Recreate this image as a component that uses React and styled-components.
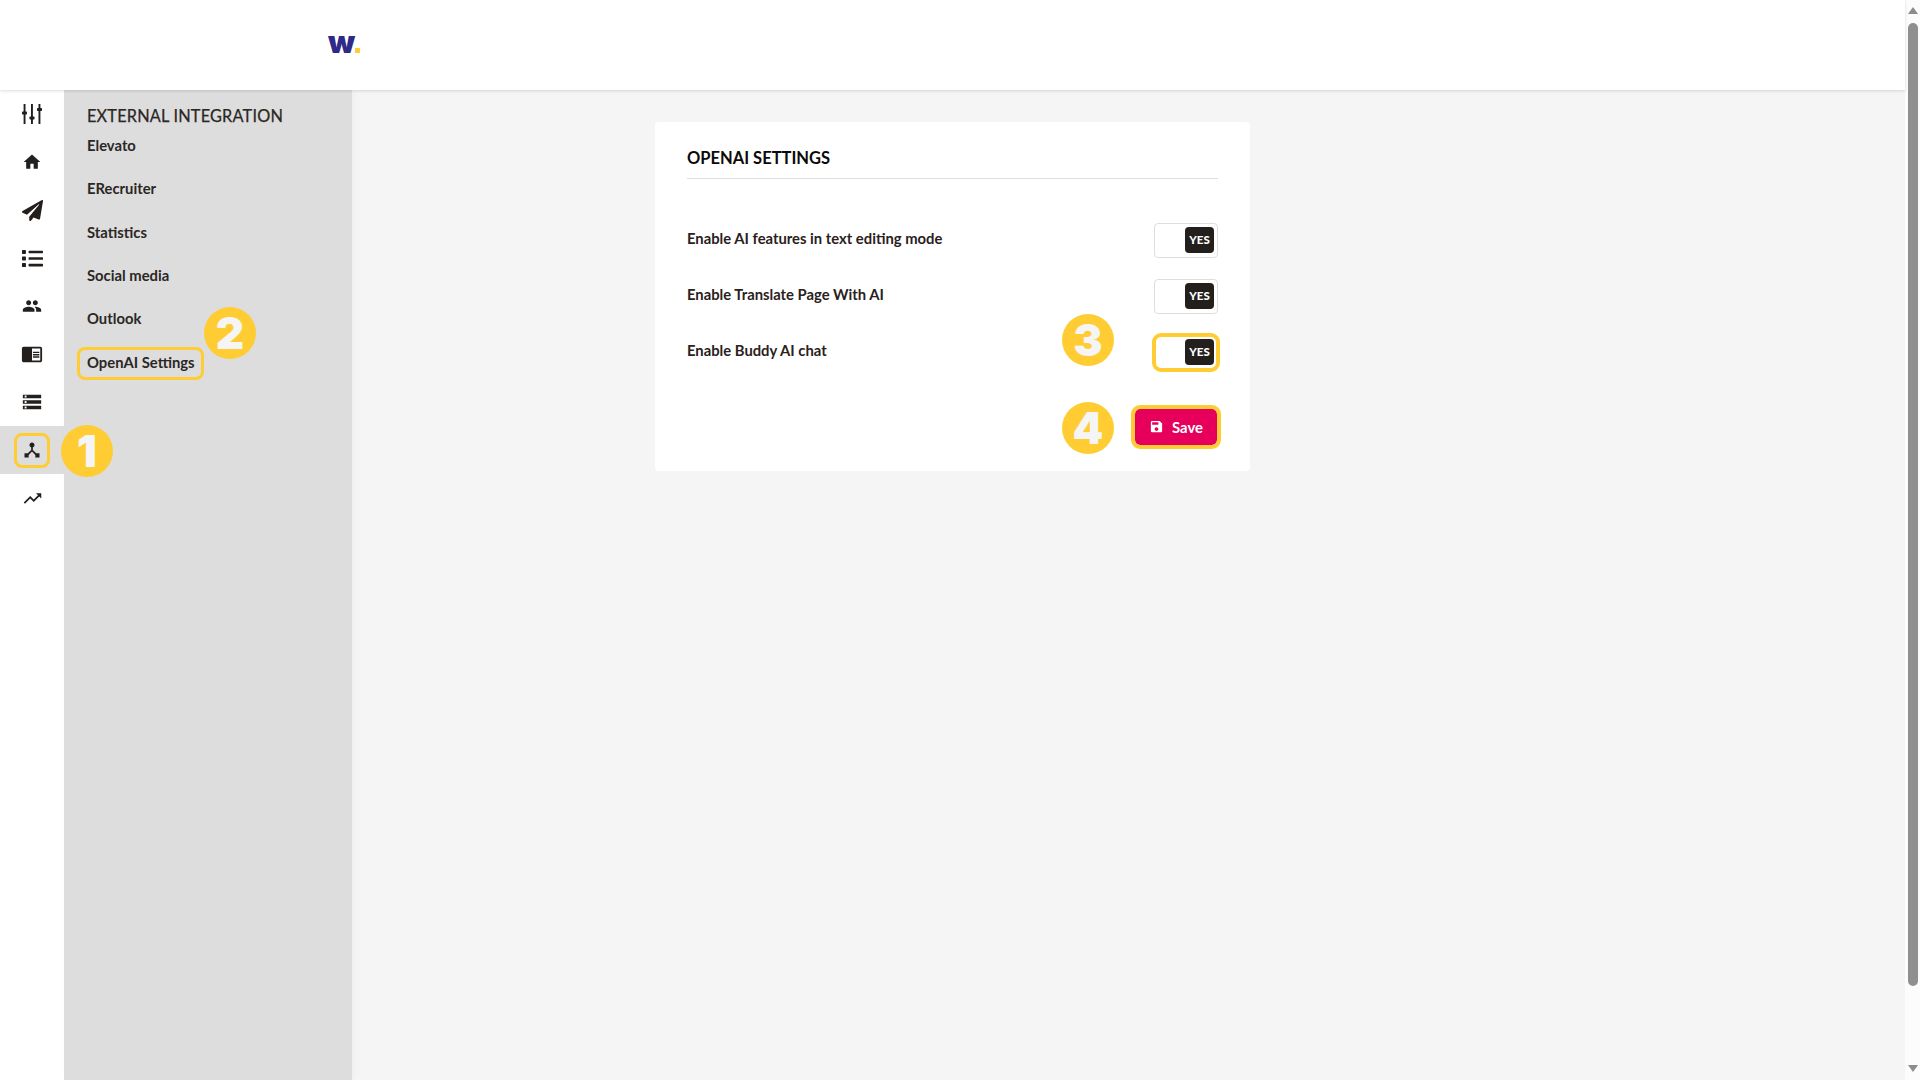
import React from "react";
import styled, { createGlobalStyle, css } from "styled-components";
import {
  MdHome,
  MdPeople,
  MdChromeReaderMode,
  MdDeviceHub,
  MdTrendingUp,
  MdSave,
  MdStorage,
} from "react-icons/md";
import { FaPaperPlane, FaList } from "react-icons/fa";

const YELLOW = "#ffcd33";

const GlobalStyle = createGlobalStyle`
  html, body {
    margin: 0;
    height: 100%;
    overflow: hidden;
    font-family: Lato, "Noto Sans", sans-serif;
    background: #f5f5f5;
  }
  *, *::before, *::after { box-sizing: border-box; }
`;

const Shell = styled.div`
  display: flex;
  width: 1920px;
  height: 1080px;
  position: relative;
`;

const Page = styled.div`
  flex: 1;
  display: flex;
  flex-direction: column;
  min-width: 0;
`;

const Header = styled.header`
  height: 90px;
  flex: none;
  background: #fff;
  display: flex;
  align-items: center;
  padding-left: 328px;
  box-shadow: 0 1px 3px rgba(0, 0, 0, 0.14);
  position: relative;
  z-index: 2;
`;

const Logo = styled.div`
  display: flex;
  align-items: flex-end;
  height: 16px;
`;

const LogoMark = styled.span`
  font-family: Inter, sans-serif;
  font-weight: 900;
  font-size: 31px;
  line-height: 16px;
  height: 16px;
  color: #2f2a87;
  position: relative;
  top: -3px;
`;

const LogoDot = styled.span`
  width: 5px;
  height: 5px;
  background: ${YELLOW};
`;

const Body = styled.div`
  flex: 1;
  display: flex;
  min-height: 0;
`;

const Rail = styled.nav`
  width: 64px;
  flex: none;
  background: #fff;
  display: flex;
  flex-direction: column;
`;

const RailItem = styled.div`
  height: 48px;
  display: flex;
  align-items: center;
  justify-content: center;
  color: #231f1c;
  background: ${(p) => (p.$active ? "#dddddd" : "transparent")};
`;

const RailFrame = styled.div`
  width: 36px;
  height: 35px;
  display: flex;
  align-items: center;
  justify-content: center;
  border: 3px solid ${YELLOW};
  border-radius: 8px;
`;

const Panel = styled.aside`
  width: 288px;
  flex: none;
  background: #dddddd;
  padding: 15px 0 0 23px;
  box-shadow: 2px 0 6px rgba(0, 0, 0, 0.03);
`;

const PanelTitle = styled.div`
  font-size: 16.3px;
  line-height: 22px;
  font-weight: 400;
  letter-spacing: 0.2px;
  color: #2b2724;
  -webkit-text-stroke: 0.25px #2b2724;
  margin-bottom: -3.8px;
`;

const PanelLink = styled.div`
  height: 43.4px;
  display: flex;
  align-items: center;
  font-size: 14.8px;
  font-weight: 700;
  color: #2b2724;
  ${(p) =>
    p.$marked &&
    css`
      position: relative;
      &::before {
        content: "";
        position: absolute;
        left: -10px;
        top: 6.5px;
        width: 127px;
        height: 33px;
        border: 3px solid ${YELLOW};
        border-radius: 8px;
      }
    `}
`;

const Main = styled.main`
  flex: 1;
  padding: 32px 0 0 303px;
`;

const Card = styled.section`
  width: 595px;
  height: 349px;
  background: #fff;
  border-radius: 4px;
  padding: 25px 32px 0;
`;

const CardTitle = styled.h2`
  margin: 0;
  height: 32px;
  border-bottom: 1px solid #dddddd;
  font-size: 16.5px;
  line-height: 22px;
  font-weight: 700;
  color: #0c0a09;
`;

const Rows = styled.div`
  margin-top: 44px;
  display: flex;
  flex-direction: column;
  gap: 21px;
`;

const Row = styled.div`
  height: 35px;
  display: flex;
  justify-content: space-between;
  align-items: flex-start;
`;

const RowLabel = styled.span`
  font-size: 14.8px;
  line-height: 20px;
  font-weight: 700;
  color: #2a211c;
  margin-top: 5px;
`;

const Toggle = styled.div`
  width: 64px;
  height: 35px;
  border: 1px solid #dedede;
  border-radius: 4px;
  background: #fff;
  display: flex;
  justify-content: flex-end;
  padding: 3px 3px 0 0;
  ${(p) =>
    p.$marked &&
    css`
      border-color: ${YELLOW};
      outline: 4px solid ${YELLOW};
      outline-offset: -2px;
      border-radius: 7px;
    `}
`;

const Knob = styled.span`
  width: 29px;
  height: 26px;
  padding-bottom: 2px;
  border-radius: 4px;
  background: #231f1c;
  color: #fff;
  font-size: 11.5px;
  font-weight: 900;
  display: flex;
  align-items: center;
  justify-content: center;
`;

const Actions = styled.div`
  display: flex;
  justify-content: flex-end;
  margin: 39px 1px 0 0;
`;

const SaveButton = styled.button`
  width: 82px;
  height: 36px;
  padding-bottom: 2px;
  border: 0;
  border-radius: 5px;
  background: #e6005c;
  color: #fff;
  font-family: inherit;
  font-size: 14.8px;
  font-weight: 700;
  display: flex;
  align-items: center;
  justify-content: center;
  gap: 8px;
  outline: 4px solid ${YELLOW};
  outline-offset: 0;
`;

const Badge = styled.div`
  position: absolute;
  left: ${(p) => p.$x - 26}px;
  top: ${(p) => p.$y - 26}px;
  width: 52px;
  height: 52px;
  border-radius: 50%;
  background: ${YELLOW};
  color: #f5f5f5;
  font-family: Inter, sans-serif;
  font-weight: 900;
  font-size: 44px;
  line-height: 52px;
  text-align: center;
  z-index: 3;
`;

const Scrollbar = styled.div`
  width: 15px;
  flex: none;
  background: #fcfcfc;
  display: flex;
  flex-direction: column;
  align-items: center;
  padding-top: 7px;
`;

const Arrow = styled.span`
  width: 0;
  height: 0;
  border-left: 5px solid transparent;
  border-right: 5px solid transparent;
  ${(p) =>
    p.$down
      ? `border-top: 7px solid #8c8c8c;`
      : `border-bottom: 7px solid #8c8c8c;`}
`;

const Thumb = styled.div`
  width: 10px;
  height: 963px;
  margin: 9px 0 79px;
  background: #8f8f8f;
  border-radius: 5px;
`;

const TuneIcon = () => (
  <svg width="22" height="22" viewBox="0 0 22 22" fill="currentColor">
    <rect x="2.6" y="1" width="1.9" height="20" />
    <rect x="10" y="1" width="1.9" height="20" />
    <rect x="17.5" y="1" width="1.9" height="20" />
    <rect x="1" y="8.5" width="5" height="3" rx="0.8" />
    <rect x="8.5" y="13.5" width="5" height="3" rx="0.8" />
    <rect x="16" y="5" width="5" height="3" rx="0.8" />
  </svg>
);

const railIcons = [
  <TuneIcon key="tune" />,
  <MdHome key="home" size={20} />,
  <FaPaperPlane key="send" size={21} />,
  <FaList key="list" size={21} />,
  <MdPeople key="people" size={20} />,
  <MdChromeReaderMode key="reader" size={22} />,
  <MdStorage key="storage" size={22} />,
];

const links = ["Elevato", "ERecruiter", "Statistics", "Social media", "Outlook"];

const settings = [
  { label: "Enable AI features in text editing mode" },
  { label: "Enable Translate Page With AI" },
  { label: "Enable Buddy AI chat", marked: true },
];

const App = () => (
  <Shell>
    <GlobalStyle />
    <Page>
      <Header>
        <Logo>
          <LogoMark>w</LogoMark>
          <LogoDot />
        </Logo>
      </Header>
      <Body>
        <Rail>
          {railIcons.map((icon) => (
            <RailItem key={icon.key}>{icon}</RailItem>
          ))}
          <RailItem $active>
            <RailFrame>
              <MdDeviceHub size={20} />
            </RailFrame>
          </RailItem>
          <RailItem>
            <MdTrendingUp size={21} />
          </RailItem>
        </Rail>
        <Panel>
          <PanelTitle>EXTERNAL INTEGRATION</PanelTitle>
          {links.map((link) => (
            <PanelLink key={link}>{link}</PanelLink>
          ))}
          <PanelLink $marked>OpenAI Settings</PanelLink>
        </Panel>
        <Main>
          <Card>
            <CardTitle>OPENAI SETTINGS</CardTitle>
            <Rows>
              {settings.map((s) => (
                <Row key={s.label}>
                  <RowLabel>{s.label}</RowLabel>
                  <Toggle $marked={s.marked}>
                    <Knob>YES</Knob>
                  </Toggle>
                </Row>
              ))}
            </Rows>
            <Actions>
              <SaveButton>
                <MdSave size={15} />
                Save
              </SaveButton>
            </Actions>
          </Card>
        </Main>
      </Body>
    </Page>
    <Scrollbar>
      <Arrow />
      <Thumb />
      <Arrow $down />
    </Scrollbar>
    <Badge $x={87} $y={451}>1</Badge>
    <Badge $x={230} $y={333}>2</Badge>
    <Badge $x={1088} $y={340}>3</Badge>
    <Badge $x={1088} $y={428}>4</Badge>
  </Shell>
);

export default App;
